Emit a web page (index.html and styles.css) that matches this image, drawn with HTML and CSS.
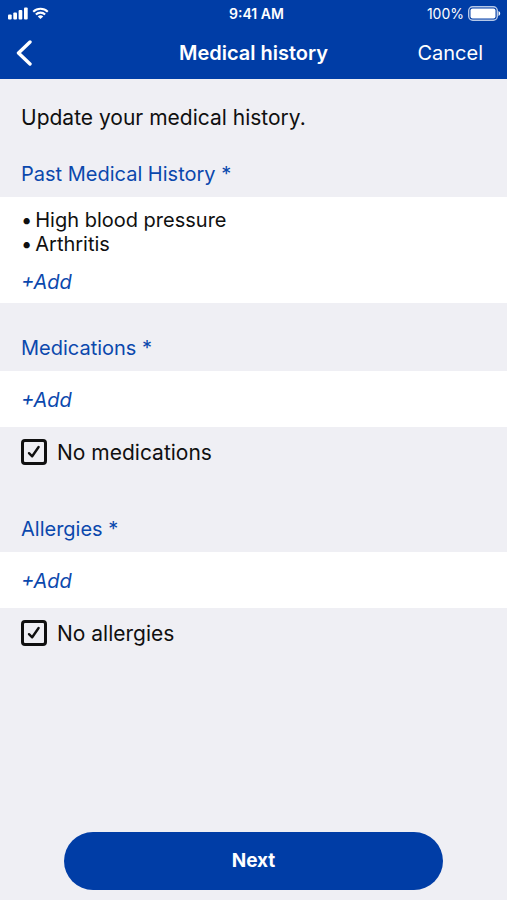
FILE: index.html
```html
<!DOCTYPE html>
<html lang="en">
<head>
<meta charset="utf-8">
<meta name="viewport" content="width=device-width, initial-scale=1">
<title>Medical history</title>
<link rel="stylesheet" href="styles.css">
</head>
<body>
<header class="top">
  <div class="status">
    <div class="status-left">
      <svg class="signal" viewBox="0 0 20 13" aria-hidden="true"><rect x="0" y="7.5" width="3.7" height="5" rx="1"/><rect x="5.3" y="5.5" width="3.7" height="7" rx="1"/><rect x="10.6" y="3" width="3.7" height="9.5" rx="1"/><rect x="16" y="0.5" width="3.7" height="12" rx="1"/></svg>
      <svg class="wifi" viewBox="0 0 18 13" aria-hidden="true"><path d="M1.3 4.6a11 11 0 0 1 15.4 0M4.1 7.6a7 7 0 0 1 9.8 0"/><path class="dot" d="M9 12.4 6.1 9.7a4.2 4.2 0 0 1 5.8 0Z"/></svg>
    </div>
    <span class="time">9:41 AM</span>
    <div class="status-right">
      <span>100%</span>
      <svg class="battery" viewBox="0 0 33 15" aria-hidden="true"><rect class="shell" x="0.7" y="0.7" width="28.6" height="13.6" rx="4"/><rect class="charge" x="2.5" y="2.5" width="25" height="10" rx="2"/><path class="charge" d="M30.5 5c1 .4 1.7 1.4 1.7 2.5s-.7 2.1-1.7 2.5Z"/></svg>
    </div>
  </div>
  <nav class="nav">
    <button class="back" type="button" aria-label="Back"><svg viewBox="0 0 16 26" aria-hidden="true"><path d="M14 2 2.5 13 14 24"/></svg></button>
    <h1>Medical history</h1>
    <button class="cancel" type="button">Cancel</button>
  </nav>
</header>
<main>
  <p class="intro">Update your medical history.</p>
  <section class="group">
    <h2>Past Medical History *</h2>
    <div class="panel panel-list">
      <ul>
        <li>High blood pressure</li>
        <li>Arthritis</li>
      </ul>
      <button class="add" type="button">+Add</button>
    </div>
  </section>
  <section class="group">
    <h2>Medications *</h2>
    <div class="panel">
      <button class="add" type="button">+Add</button>
    </div>
    <label class="check"><input type="checkbox" checked><span>No medications</span></label>
  </section>
  <section class="group">
    <h2>Allergies *</h2>
    <div class="panel">
      <button class="add" type="button">+Add</button>
    </div>
    <label class="check"><input type="checkbox" checked><span>No allergies</span></label>
  </section>
</main>
<footer class="actions">
  <button class="next" type="button">Next</button>
</footer>
</body>
</html>
```
FILE: styles.css
```css
* { box-sizing: border-box; }

body {
  margin: 0;
  min-height: 100vh;
  display: flex;
  flex-direction: column;
  background: #efeff4;
  color: #101010;
  font-family: Inter, "Liberation Sans", sans-serif;
  font-size: 20px;
  line-height: 24px;
}

h1, h2, p, ul { margin: 0; padding: 0; }

button {
  margin: 0;
  padding: 0;
  border: 0;
  background: none;
  color: inherit;
  font: inherit;
  cursor: pointer;
}

.top { background: #003da6; color: #fff; }

.status {
  display: grid;
  grid-template-columns: 1fr auto 1fr;
  align-items: center;
  height: 27px;
  padding: 0 6px 0 8px;
  font-size: 14px;
  line-height: 20px;
}

.status-left, .status-right { display: flex; align-items: center; gap: 4px; }
.status-right { justify-content: flex-end; }
.time { padding-left: 4px; font-weight: 600; }

.signal { width: 20px; height: 13px; fill: #fff; }
.wifi { width: 17px; height: 13px; fill: none; stroke: #fff; stroke-width: 2.2; }
.wifi .dot { fill: #fff; stroke: none; }
.battery { width: 33px; height: 15px; }
.shell { fill: none; stroke: #b5c8e8; stroke-width: 1.4; }
.charge { fill: #fff; }

.nav {
  display: grid;
  grid-template-columns: 1fr auto 1fr;
  align-items: center;
  height: 52px;
  padding: 0 16px;
}

.nav h1 { font-size: 20px; font-weight: 600; }
.back { justify-self: start; display: flex; }
.back svg { width: 16px; height: 26px; fill: none; stroke: #fff; stroke-width: 3.4; stroke-linecap: round; stroke-linejoin: round; }
.cancel { justify-self: end; padding-right: 8px; }

main { flex: 1; }
.intro { padding: 27px 21px 21px; font-size: 21px; }
.group { margin-bottom: 22px; }

.group h2 {
  padding: 0 21px;
  color: #0b48ad;
  font-size: 20px;
  font-weight: 400;
  line-height: 46px;
}

.panel {
  padding: 17px 21px 15px;
  background: #fff;
}

.panel-list { padding: 11px 21px 9px; }

.panel ul { list-style: none; padding-bottom: 14px; }
.panel li { display: flex; gap: 3px; }
.panel li::before { content: "•"; }

.add {
  display: block;
  color: #0b48ad;
  font-style: italic;
}

.check {
  display: flex;
  align-items: center;
  gap: 10px;
  padding: 12px 21px 19px;
  font-size: 21px;
}

.check span { padding-top: 2px; }

.check input {
  appearance: none;
  width: 26px;
  height: 26px;
  margin: 0;
  border: 3px solid #101010;
  border-radius: 4px;
  background: url("data:image/svg+xml,%3Csvg xmlns='http://www.w3.org/2000/svg' viewBox='0 0 20 20' fill='none' stroke='%23101010' stroke-width='2.4' stroke-linecap='round' stroke-linejoin='round'%3E%3Cpath d='M5 11.2 8.2 14.3 14.600 5'/%3E%3C/svg%3E") center / 20px 20px no-repeat;
}

.check input:not(:checked) { background-image: none; }

.actions { padding: 0 64px 10px; }

.next {
  width: 100%;
  height: 58px;
  border-radius: 29px;
  background: #003da6;
  color: #fff;
  font-size: 19px;
  font-weight: 700;
}
```
